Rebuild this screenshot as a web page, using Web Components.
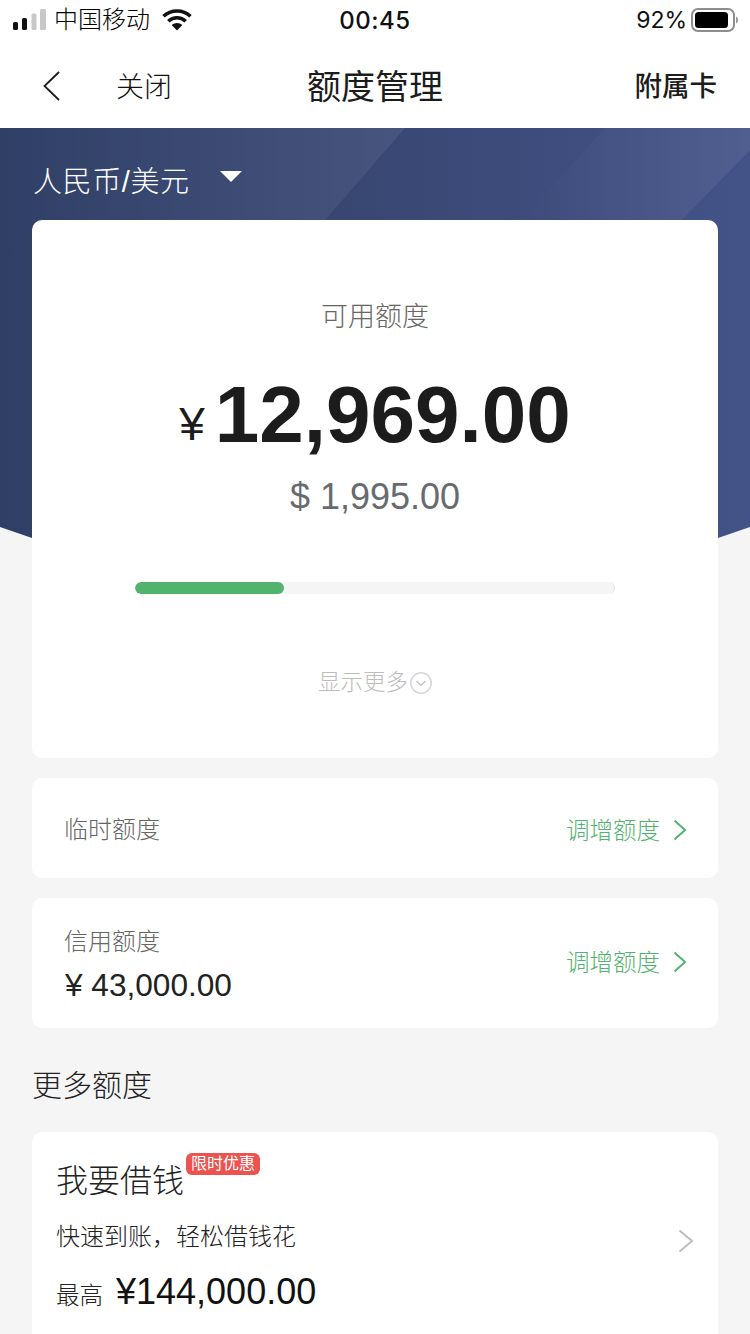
<!DOCTYPE html>
<html lang="zh-CN">
<head>
<meta charset="utf-8">
<title>额度管理</title>
<style>
    html, body {
        margin: 0;
        height: 1334px;
        overflow: hidden;
        background: #f5f5f5;
        color: #222;
        font-family: "Liberation Sans", "Noto Sans CJK SC", sans-serif;
    }
</style>
</head>
<body>
<status-bar></status-bar>
<nav-bar></nav-bar>
<hero-banner>
    <limit-summary></limit-summary>
</hero-banner>
<page-content>
    <quota-row label="临时额度"></quota-row>
    <quota-row label="信用额度" amount="¥ 43,000.00"></quota-row>
    <section-title>更多额度</section-title>
    <loan-card></loan-card>
</page-content>

<script>
const CJK = '"Liberation Sans", "Noto Sans CJK SC", sans-serif';

class StatusBar extends HTMLElement {
    constructor() {
        super();
        this.attachShadow({ mode: 'open' });
        this.shadowRoot.innerHTML = `
            <style>
                :host {
                    display: grid;
                    grid-template-columns: 1fr auto 1fr;
                    align-items: center;
                    height: 40px;
                    background: #fff;
                    color: #111;
                    font-family: ${CJK};
                }
                .left, .right { display: flex; align-items: center; }
                .left { padding-left: 13px; }
                .right { justify-content: flex-end; padding-right: 12px; }
                .carrier { font-size: 24px; line-height: 40px; margin-left: 8px; margin-right: 12px; font-weight: 300; color: #000; }
                .time { font-family: Inter, sans-serif; font-weight: 500; font-size: 24px; letter-spacing: 0.5px; }
                .pct { font-family: Inter, sans-serif; font-size: 23px; margin-right: 4px; }
                svg { display: block; }
            </style>
            <div class="left">
                <svg width="33" height="22" viewBox="0 0 33 22">
                    <rect x="0" y="13" width="5" height="8" rx="1.5" fill="#111"/>
                    <rect x="9" y="9" width="5" height="12" rx="1.5" fill="#111"/>
                    <rect x="18.5" y="4.5" width="5" height="16.5" rx="1.5" fill="#c8c8c8"/>
                    <rect x="27" y="0" width="6" height="21" rx="1.5" fill="#c8c8c8"/>
                </svg>
                <span class="carrier">中国移动</span>
                <svg width="30" height="22" viewBox="0 0 30 22">
                    <path d="M1.5 7.2C9 .2 21 .2 28.5 7.2" fill="none" stroke="#111" stroke-width="3.6"/>
                    <path d="M6.3 12.2C11.3 7.6 18.7 7.6 23.7 12.2" fill="none" stroke="#111" stroke-width="3.6"/>
                    <path d="M9.6 16L15 21.5 20.4 16C17.2 13.2 12.8 13.2 9.6 16Z" fill="#111"/>
                </svg>
            </div>
            <div class="time">00:45</div>
            <div class="right">
                <span class="pct">92%</span>
                <svg width="47" height="24" viewBox="0 0 47 24">
                    <rect x="1" y="1" width="42" height="22" rx="6" fill="none" stroke="#8e8e8e" stroke-width="2"/>
                    <rect x="4" y="4" width="33" height="16" rx="3.5" fill="#000"/>
                    <path d="M45 8.5c1.3.4 2 1.8 2 3.5s-.7 3.1-2 3.5z" fill="#999"/>
                </svg>
            </div>
        `;
    }
}

class NavBar extends HTMLElement {
    constructor() {
        super();
        this.attachShadow({ mode: 'open' });
        this.shadowRoot.innerHTML = `
            <style>
                :host {
                    display: grid;
                    grid-template-columns: 1fr auto 1fr;
                    align-items: center;
                    height: 88px;
                    background: #fff;
                    color: #1c1c1c;
                    font-family: ${CJK};
                }
                .left { display: flex; align-items: center; padding-left: 43px; }
                .close { font-size: 28px; margin-left: 56px; font-weight: 300; color: #111; padding-top: 2px; }
                .title { font-size: 34px; }
                .right { text-align: right; padding-right: 33px; font-size: 27.5px; font-weight: 500; }
                svg { display: block; margin-top: 3px; }
            </style>
            <div class="left">
                <svg width="17" height="30" viewBox="0 0 17 30">
                    <path d="M16 1L1.5 15 16 29" fill="none" stroke="#1c1c1c" stroke-width="1.8"/>
                </svg>
                <span class="close">关闭</span>
            </div>
            <div class="title">额度管理</div>
            <div class="right">附属卡</div>
        `;
    }
}

class HeroBanner extends HTMLElement {
    constructor() {
        super();
        this.attachShadow({ mode: 'open' });
        this.shadowRoot.innerHTML = `
            <style>
                :host {
                    display: block;
                    position: relative;
                    padding: 0 32px;
                    font-family: ${CJK};
                }
                .bg { position: absolute; left: 0; top: 0; width: 750px; height: 420px; display: block; }
                .currency {
                    position: relative;
                    display: flex;
                    align-items: center;
                    box-sizing: border-box;
                    height: 92px;
                    padding: 10px 0 0 1px;
                    color: #fff;
                    font-size: 29px;
                    letter-spacing: .6px;
                    font-weight: 300;
                }
                .currency svg { margin: 0 0 0 30px; display: block; transform: translateY(-3px); }
                ::slotted(*) { position: relative; }
            </style>
            <svg class="bg" viewBox="0 0 750 420">
                <defs>
                    <linearGradient id="base" x1="0" y1="0" x2="1" y2="0">
                        <stop offset="0" stop-color="#2f3f66"/>
                        <stop offset=".5" stop-color="#394773"/>
                        <stop offset="1" stop-color="#435388"/>
                    </linearGradient>
                    <linearGradient id="band1" x1="0" y1="0" x2="1" y2="0">
                        <stop offset="0" stop-color="#fff" stop-opacity="0"/>
                        <stop offset="1" stop-color="#fff" stop-opacity=".07"/>
                    </linearGradient>
                    <linearGradient id="band2" x1="0" y1="0" x2="1" y2="0">
                        <stop offset="0" stop-color="#fff" stop-opacity="0"/>
                        <stop offset="1" stop-color="#fff" stop-opacity=".07"/>
                    </linearGradient>
                </defs>
                <path d="M0 0H750V399L718 410Q375 430 32 410L0 399Z" fill="url(#base)"/>
                <path d="M0 0H405L325 92 32 272 0 300Z" fill="url(#band1)"/>
                <path d="M605 0H750V22L682 92H522Z" fill="url(#band2)"/>
            </svg>
            <div class="currency">
                <span>人民币/美元</span>
                <svg width="22" height="11" viewBox="0 0 22 11"><path d="M0 0H22L11 11Z" fill="#fff"/></svg>
            </div>
            <slot></slot>
        `;
    }
}

class LimitSummary extends HTMLElement {
    constructor() {
        super();
        this.attachShadow({ mode: 'open' });
        this.shadowRoot.innerHTML = `
            <style>
                :host {
                    display: flex;
                    flex-direction: column;
                    align-items: center;
                    box-sizing: border-box;
                    height: 538px;
                    padding-top: 77px;
                    background: #fff;
                    border-radius: 10px;
                    font-family: ${CJK};
                }
                .label { font-size: 27px; line-height: 40px; color: #666; font-weight: 300; }
                .amount {
                    display: flex;
                    align-items: baseline;
                    gap: 10px;
                    margin-top: 28px;
                    line-height: 100px;
                    color: #1c1c1c;
                }
                .yen { font-size: 46px; transform: translateY(-2px); }
                .num { font-size: 80px; font-weight: 700; }
                .usd { margin-top: -1px; font-size: 36px; line-height: 44px; color: #666b70; }
                .track {
                    box-sizing: border-box;
                    width: 480px;
                    height: 12px;
                    margin-top: 63px;
                    background: #f5f5f5;
                    border-right: 1px solid #dcebe2;
                    border-radius: 6px;
                    overflow: hidden;
                }
                .fill { width: 149px; height: 100%; background: #52b36f; border-radius: 6px; }
                .more {
                    display: flex;
                    align-items: center;
                    gap: 2px;
                    margin-top: 73px;
                    line-height: 32px;
                    font-size: 22.5px;
                    color: #bdbdbd;
                    font-weight: 300;
                }
                svg { display: block; }
            </style>
            <div class="label">可用额度</div>
            <div class="amount"><span class="yen">¥</span><span class="num">12,969.00</span></div>
            <div class="usd">$ 1,995.00</div>
            <div class="track"><div class="fill"></div></div>
            <div class="more">
                <span>显示更多</span>
                <svg width="22" height="22" viewBox="0 0 22 22">
                    <circle cx="11" cy="11" r="10.25" fill="none" stroke="#d6d6d6" stroke-width="1.5"/>
                    <path d="M6.5 9l4.5 4.5L15.5 9" fill="none" stroke="#c4c4c4" stroke-width="1.5"/>
                </svg>
            </div>
        `;
    }
}

class PageContent extends HTMLElement {
    constructor() {
        super();
        this.attachShadow({ mode: 'open' });
        this.shadowRoot.innerHTML = `
            <style>
                :host {
                    display: flex;
                    flex-direction: column;
                    gap: 20px;
                    padding: 20px 32px 0;
                }
            </style>
            <slot></slot>
        `;
    }
}

class QuotaRow extends HTMLElement {
    constructor() {
        super();
        this.attachShadow({ mode: 'open' });
        const amount = this.getAttribute('amount');
        this.shadowRoot.innerHTML = `
            <style>
                :host {
                    display: flex;
                    align-items: center;
                    justify-content: space-between;
                    box-sizing: border-box;
                    height: ${amount ? 130 : 100}px;
                    padding: 0 31px 0 32px;
                    background: #fff;
                    border-radius: 10px;
                    font-family: ${CJK};
                }
                .info { margin-top: 4px; }
                .label { font-size: 24px; line-height: 34px; color: #666; font-weight: 300; }
                .amount { font-size: 31.6px; line-height: 40px; color: #222; margin: 6px 0 0 1px; }
                .action {
                    display: flex;
                    align-items: center;
                    gap: 13px;
                    margin-top: ${amount ? -2 : 4}px;
                    font-size: 23.5px;
                    line-height: 34px;
                    color: #52b36f;
                    font-weight: 300;
                }
                .action span { padding-top: 2px; }
                svg { display: block; }
            </style>
            <div class="info">
                <div class="label">${this.getAttribute('label')}</div>
                ${amount ? `<div class="amount">${amount}</div>` : ''}
            </div>
            <div class="action">
                <span>调增额度</span>
                <svg width="14" height="22" viewBox="0 0 14 22">
                    <path d="M1.5 1.5L12 11 1.5 20.5" fill="none" stroke="#52b36f" stroke-width="2"/>
                </svg>
            </div>
        `;
    }
}

class SectionTitle extends HTMLElement {
    constructor() {
        super();
        this.attachShadow({ mode: 'open' });
        this.shadowRoot.innerHTML = `
            <style>
                :host {
                    display: block;
                    margin: 16px 0 4px;
                    font-size: 30px;
                    line-height: 44px;
                    color: #222;
                    font-family: ${CJK};
                    font-weight: 300;
                }
            </style>
            <slot></slot>
        `;
    }
}

class LoanCard extends HTMLElement {
    constructor() {
        super();
        this.attachShadow({ mode: 'open' });
        this.shadowRoot.innerHTML = `
            <style>
                :host {
                    display: flex;
                    align-items: flex-start;
                    justify-content: space-between;
                    box-sizing: border-box;
                    height: 250px;
                    padding: 26px 24px 0 24px;
                    background: #fff;
                    border-radius: 10px 10px 0 0;
                    font-family: ${CJK};
                }
                .head { display: flex; align-items: flex-start; }
                .title { font-size: 32px; line-height: 46px; color: #222; font-weight: 300; }
                .badge {
                    margin: -5px 0 0 2px;
                    padding: 0 5px;
                    height: 22px;
                    line-height: 22px;
                    font-size: 16px;
                    color: #fff;
                    background: #ec5350;
                    border-radius: 6px;
                    white-space: nowrap;
                }
                .desc { margin-top: 16px; font-size: 24px; line-height: 34px; color: #222; font-weight: 300; }
                .max { display: flex; align-items: baseline; gap: 13px; margin-top: 16px; line-height: 44px; color: #111; }
                .max small { font-size: 23.5px; color: #222; font-weight: 300; }
                .max b { font-weight: 400; font-size: 36px; }
                svg { display: block; margin-top: 71px; }
            </style>
            <div>
                <div class="head"><span class="title">我要借钱</span><span class="badge">限时优惠</span></div>
                <div class="desc">快速到账，轻松借钱花</div>
                <div class="max"><small>最高</small><b>¥144,000.00</b></div>
            </div>
            <svg width="16" height="24" viewBox="0 0 16 24">
                <path d="M1.5 1.5L14 12 1.5 22.5" fill="none" stroke="#bdbdbd" stroke-width="2"/>
            </svg>
        `;
    }
}

customElements.define('status-bar', StatusBar);
customElements.define('nav-bar', NavBar);
customElements.define('hero-banner', HeroBanner);
customElements.define('limit-summary', LimitSummary);
customElements.define('page-content', PageContent);
customElements.define('quota-row', QuotaRow);
customElements.define('section-title', SectionTitle);
customElements.define('loan-card', LoanCard);
</script>
</body>
</html>
